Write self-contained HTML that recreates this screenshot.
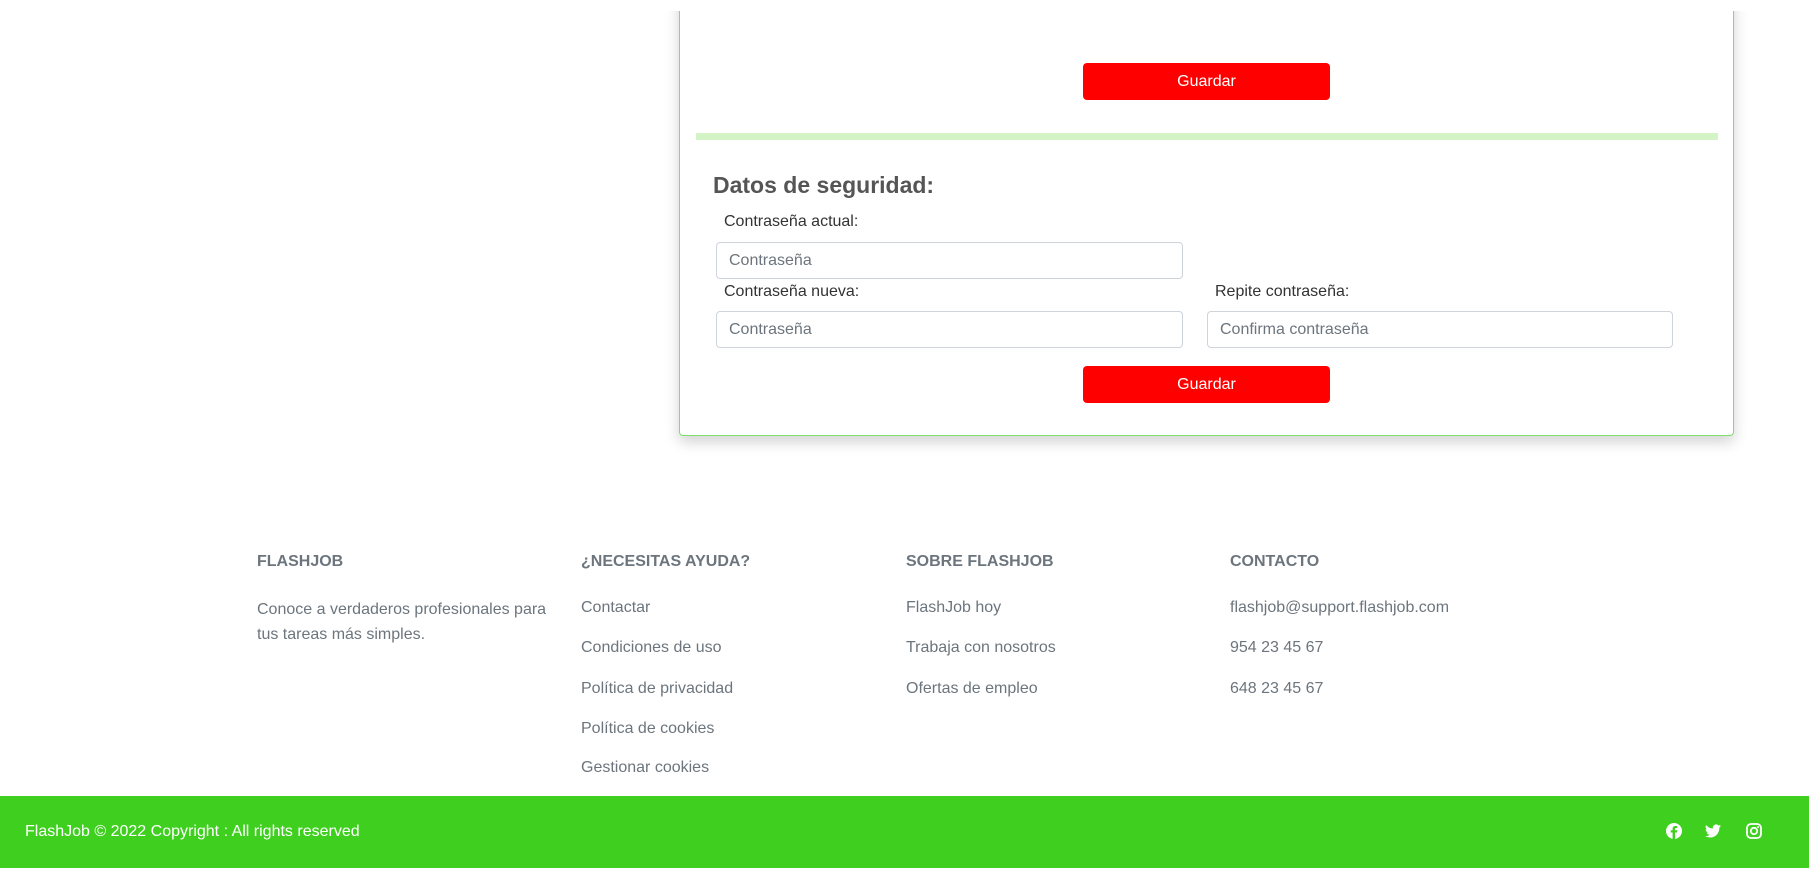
<!DOCTYPE html>
<html><head><meta charset="utf-8"><style>
*{box-sizing:border-box;margin:0;padding:0}
body{width:1809px;height:869px;background:#fff;font-family:"Liberation Sans",sans-serif;position:relative;overflow:hidden}
.a{position:absolute}
.card{left:679px;top:-10px;width:1055px;height:446px;border:1px solid #7ee06a;border-radius:4px;box-shadow:0 6px 14px rgba(0,0,0,.18);background:#fff}
.btn{width:247px;height:37px;background:#ff0000;color:#fff;border-radius:4px;font-size:16px;text-align:center;line-height:37px}
.inp{height:37px;border:1px solid #ced4da;border-radius:4px;color:#6c757d;font-size:16px;line-height:35px;padding-left:12px;background:#fff}
.lbl{font-size:16px;color:#333}
.fh{font-size:16px;font-weight:bold;color:#6c757d}
.fl{font-size:16px;color:#6c757d}
</style></head><body>
<div class="a card"></div>
<div class="a" style="left:0;top:0;width:1809px;height:11px;background:#fff"></div>
<div class="a btn" style="left:1083px;top:63px">Guardar</div>
<div class="a" style="left:696px;top:133px;width:1022px;height:7px;background:#d4f4c6"></div>
<div class="a" style="left:713px;top:172px;font-size:23px;font-weight:bold;color:#555">Datos de seguridad:</div>
<div class="a lbl" style="left:724px;top:213px">Contraseña actual:</div>
<div class="a inp" style="left:716px;top:242px;width:467px">Contraseña</div>
<div class="a lbl" style="left:724px;top:283px">Contraseña nueva:</div>
<div class="a lbl" style="left:1215px;top:283px">Repite contraseña:</div>
<div class="a inp" style="left:716px;top:311px;width:467px">Contraseña</div>
<div class="a inp" style="left:1207px;top:311px;width:466px">Confirma contraseña</div>
<div class="a btn" style="left:1083px;top:366px">Guardar</div>

<div class="a fh" style="left:257px;top:553px">FLASHJOB</div>
<div class="a fh" style="left:581px;top:553px">¿NECESITAS AYUDA?</div>
<div class="a fh" style="left:906px;top:553px">SOBRE FLASHJOB</div>
<div class="a fh" style="left:1230px;top:553px">CONTACTO</div>
<div class="a fl" style="left:257px;top:597px;line-height:25px;width:300px">Conoce a verdaderos profesionales para tus tareas más simples.</div>
<div class="a fl" style="left:581px;top:599px">Contactar</div>
<div class="a fl" style="left:581px;top:639px">Condiciones de uso</div>
<div class="a fl" style="left:581px;top:680px">Política de privacidad</div>
<div class="a fl" style="left:581px;top:720px">Política de cookies</div>
<div class="a fl" style="left:581px;top:759px">Gestionar cookies</div>
<div class="a fl" style="left:906px;top:599px">FlashJob hoy</div>
<div class="a fl" style="left:906px;top:639px">Trabaja con nosotros</div>
<div class="a fl" style="left:906px;top:680px">Ofertas de empleo</div>
<div class="a fl" style="left:1230px;top:599px">flashjob@support.flashjob.com</div>
<div class="a fl" style="left:1230px;top:639px">954 23 45 67</div>
<div class="a fl" style="left:1230px;top:680px">648 23 45 67</div>

<div class="a" style="left:0;top:796px;width:1809px;height:72px;background:#3ecf1f"></div>
<div class="a" style="left:25px;top:823px;font-size:16px;color:#fff">FlashJob © 2022 Copyright : All rights reserved</div>
<svg class="a" style="left:1666px;top:823px" width="16" height="16" viewBox="0 0 16 16"><circle cx="8" cy="8" r="8" fill="#fff"/><path d="M9 16V9.5h2l.3-2.2H9V6c0-.6.2-1 1-1h1.3V3.1c-.3 0-1-.1-1.8-.1-1.8 0-2.9 1-2.9 3v1.3H4.7v2.2h1.9V16z" fill="#3ecf1f"/></svg>
<svg class="a" style="left:1705px;top:824px" width="16" height="14" viewBox="0 0 16 13"><path d="M16 1.5a6.6 6.6 0 0 1-1.9.5A3.3 3.3 0 0 0 15.6.2a6.6 6.6 0 0 1-2.1.8A3.3 3.3 0 0 0 7.9 4 9.3 9.3 0 0 1 1.1.6a3.3 3.3 0 0 0 1 4.4 3.300 3.3 0 0 1-1.5-.4 3.3 3.3 0 0 0 2.6 3.2 3.3 3.3 0 0 1-1.5.1 3.3 3.3 0 0 0 3.1 2.3A6.6 6.6 0 0 1 0 11.5 9.3 9.3 0 0 0 5 13c6 0 9.3-5 9.3-9.3v-.4A6.7 6.7 0 0 0 16 1.5z" fill="#fff"/></svg>
<svg class="a" style="left:1746px;top:823px" width="16" height="16" viewBox="0 0 16 16"><rect x="1" y="1" width="14" height="14" rx="4" fill="none" stroke="#fff" stroke-width="1.8"/><circle cx="8" cy="8" r="3.2" fill="none" stroke="#fff" stroke-width="1.8"/><circle cx="12" cy="4" r="1" fill="#fff"/></svg>
</body></html>
